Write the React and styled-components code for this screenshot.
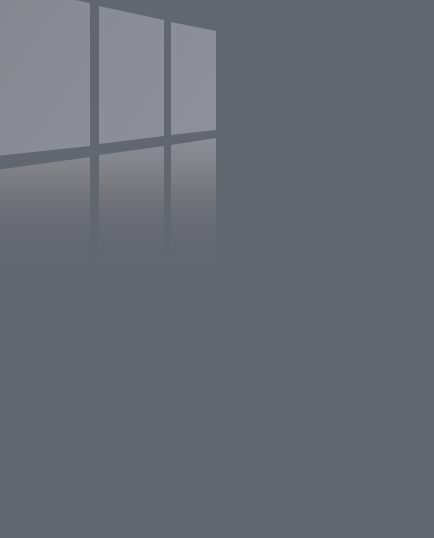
import React from 'react'
import styled, { createGlobalStyle } from 'styled-components'

const GlobalStyle = createGlobalStyle`
  html, body {
    margin: 0;
    padding: 0;
    background: #62666f;
  }
`

const Wall = styled.main`
  width: 100%;
  height: 100vh;
  overflow: hidden;
  background: #62666f;
`

const Light = styled.svg`
  display: block;
  width: 434px;
  height: 538px;
`

const upperPanes = [
  '-4,-4 55,-4 90,3 90,146 -4,156',
  '99,6 164,20 164,136 99,144',
  '171,22 216,31 216,130 171,135',
]

const lowerPanes = [
  '-4,170 90,157 90,262 -4,262',
  '99,155 164,146 164,262 99,262',
  '171,145 216,138 216,262 171,262',
]

const App = () => {
  return (
    <>
      <GlobalStyle />
      <Wall>
        <Light viewBox="0 0 434 538">
          <defs>
            <linearGradient id="upper" gradientUnits="userSpaceOnUse" x1="0" y1="0" x2="200" y2="140">
              <stop offset="0" stopColor="#85888f" />
              <stop offset="0.6" stopColor="#8b8e96" />
              <stop offset="1" stopColor="#8e9099" />
            </linearGradient>
            <linearGradient id="lower" gradientUnits="userSpaceOnUse" x1="0" y1="140" x2="0" y2="262">
              <stop offset="0" stopColor="#8a8d95" />
              <stop offset="0.16" stopColor="#84868d" />
              <stop offset="0.32" stopColor="#7c7d82" />
              <stop offset="0.44" stopColor="#74767b" />
              <stop offset="0.6" stopColor="#6b6e75" />
              <stop offset="0.8" stopColor="#656971" />
              <stop offset="1" stopColor="#62666f" />
            </linearGradient>
            <filter id="soft" x="-5%" y="-5%" width="110%" height="110%">
              <feGaussianBlur stdDeviation="0.6" />
            </filter>
          </defs>
          <g filter="url(#soft)">
            {upperPanes.map((points) => (
              <polygon key={points} points={points} fill="url(#upper)" />
            ))}
            {lowerPanes.map((points) => (
              <polygon key={points} points={points} fill="url(#lower)" />
            ))}
          </g>
        </Light>
      </Wall>
    </>
  )
}

export default App
